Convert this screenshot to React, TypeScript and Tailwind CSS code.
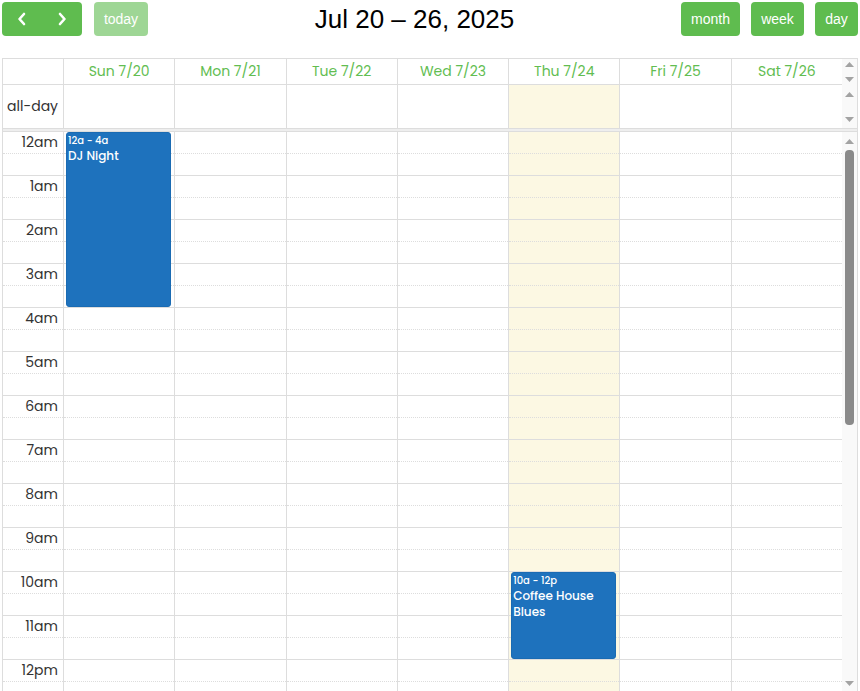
import React from "react";

const days = ["Sun 7/20", "Mon 7/21", "Tue 7/22", "Wed 7/23", "Thu 7/24", "Fri 7/25", "Sat 7/26"];
const hours = ["12am","1am","2am","3am","4am","5am","6am","7am","8am","9am","10am","11am","12pm","1pm","2pm","3pm","4pm","5pm","6pm","7pm","8pm","9pm","10pm","11pm"];

const FONT = "font-['Poppins','Inter','Noto_Sans',sans-serif]";
const BTN = "h-[34px] rounded-[4px] bg-[#5fbc4f] text-white text-[14px] font-['Liberation_Sans',Arial,sans-serif]";

function Chevron({ dir }: { dir: "l" | "r" }) {
  return (
    <svg width="10" height="14" viewBox="0 0 10 14" fill="none" stroke="white" strokeWidth="2.6" strokeLinecap="round" strokeLinejoin="round">
      {dir === "l" ? <polyline points="7,2 2.5,7 7,12" /> : <polyline points="3,2 7.5,7 3,12" />}
    </svg>
  );
}

function Tri({ up }: { up?: boolean }) {
  return (
    <svg width="9" height="5" viewBox="0 0 9 5" className="block">
      {up ? <polygon points="0,5 4.5,0 9,5" fill="#a3a3a3" /> : <polygon points="0,0 9,0 4.5,5" fill="#a3a3a3" />}
    </svg>
  );
}

function HourBlock() {
  return (
    <div className="h-[44px] flex flex-col">
      <div className="h-[22px] border-b border-dotted border-[#ddd]" />
      <div className="h-[22px] border-b border-[#ddd]" />
    </div>
  );
}

function Event({ top, height, time, title }: { top: number; height: number; time: string; title: string }) {
  return (
    <div
      className="absolute left-[2px] right-[3px] rounded-[3px] bg-[#1e72bd] border border-[#1a6bb3] text-white px-[1px] overflow-hidden"
      style={{ top, height }}
    >
      <div className="text-[10px] font-medium leading-[14px] pt-[1px]">{time}</div>
      <div className="text-[12px] font-medium leading-[16px]">{title}</div>
    </div>
  );
}

export default function App() {
  return (
    <div className={`w-[860px] h-[691px] overflow-hidden bg-white ${FONT} text-[#333]`}>
      {/* Toolbar */}
      <div className="flex items-center justify-between h-[34px] mt-[2px] px-[2px]">
        <div className="flex items-center gap-[12px]">
          <div className="flex h-[34px] w-[80px] rounded-[4px] bg-[#5fbc4f] overflow-hidden">
            <button className="flex-1 flex items-center justify-center"><Chevron dir="l" /></button>
            <button className="flex-1 flex items-center justify-center"><Chevron dir="r" /></button>
          </div>
          <button className={`${BTN} w-[54px] opacity-60`}>today</button>
        </div>
        <h2 className="text-[26px] leading-none text-black font-['Liberation_Sans',Arial,sans-serif]">Jul 20 – 26, 2025</h2>
        <div className="flex items-center gap-[11px]">
          <button className={`${BTN} w-[59px]`}>month</button>
          <button className={`${BTN} w-[53px]`}>week</button>
          <button className={`${BTN} w-[43px]`}>day</button>
        </div>
      </div>

      {/* Calendar table */}
      <div className="ml-[2px] mt-[22px] w-[856px] border-l border-t border-r border-[#ddd]">
        {/* Day header */}
        <div className="flex h-[26px]">
          <div className="flex-1 grid grid-cols-[60px_repeat(7,1fr)] border-b border-[#ddd]">
            <div />
            {days.map((d) => (
              <div key={d} className="border-l border-[#ddd] flex items-center justify-center text-[14px] text-[#62bd51]">
                {d}
              </div>
            ))}
          </div>
          <div className="w-[15px] bg-[#f9f9f9] flex flex-col items-center justify-between pt-[3px] pb-[3px]">
            <Tri up />
            <Tri />
          </div>
        </div>
        {/* All day */}
        <div className="flex h-[43px]">
          <div className="flex-1 grid grid-cols-[60px_repeat(7,1fr)]">
            <div className="flex items-center justify-end pr-[5px] text-[14px] text-[#333]">all-day</div>
            {days.map((d, i) => (
              <div key={d} className={`border-l border-[#ddd] ${i === 4 ? "bg-[#fcf8e3]" : ""}`} />
            ))}
          </div>
          <div className="w-[15px] bg-[#f9f9f9] flex flex-col items-center justify-between pt-[7px] pb-[6px]">
            <Tri up />
            <Tri />
          </div>
        </div>
        {/* divider */}
        <div className="h-[4px] bg-[#eee] border-y border-[#ddd]" />
        {/* Time grid */}
        <div className="flex h-[559px] overflow-hidden">
          <div className="flex-1 grid grid-cols-[60px_repeat(7,1fr)] content-start">
            <div>
              {hours.map((h) => (
                <div key={h} className="h-[44px] flex flex-col">
                  <div className="h-[22px] border-b border-dotted border-[#ddd] flex items-center justify-end pr-[5px] text-[14px] text-[#333]">
                    {h}
                  </div>
                  <div className="h-[22px] border-b border-[#ddd]" />
                </div>
              ))}
            </div>
            {days.map((d, i) => (
              <div key={d} className={`relative border-l border-[#ddd] ${i === 4 ? "bg-[#fcf8e3]" : ""}`}>
                {hours.map((h) => (
                  <HourBlock key={h} />
                ))}
                {i === 0 && <Event top={0} height={175} time="12a - 4a" title="DJ Night" />}
                {i === 4 && <Event top={440} height={87} time="10a - 12p" title="Coffee House Blues" />}
              </div>
            ))}
          </div>
          <div className="w-[15px] bg-[#f9f9f9] flex flex-col items-center pt-[7px] pb-[5px]">
            <Tri up />
            <div className="mt-[6px] w-[9px] h-[275px] rounded-[4px] bg-[#8a8a8a]" />
            <div className="flex-1" />
            <Tri />
          </div>
        </div>
      </div>
    </div>
  );
}
